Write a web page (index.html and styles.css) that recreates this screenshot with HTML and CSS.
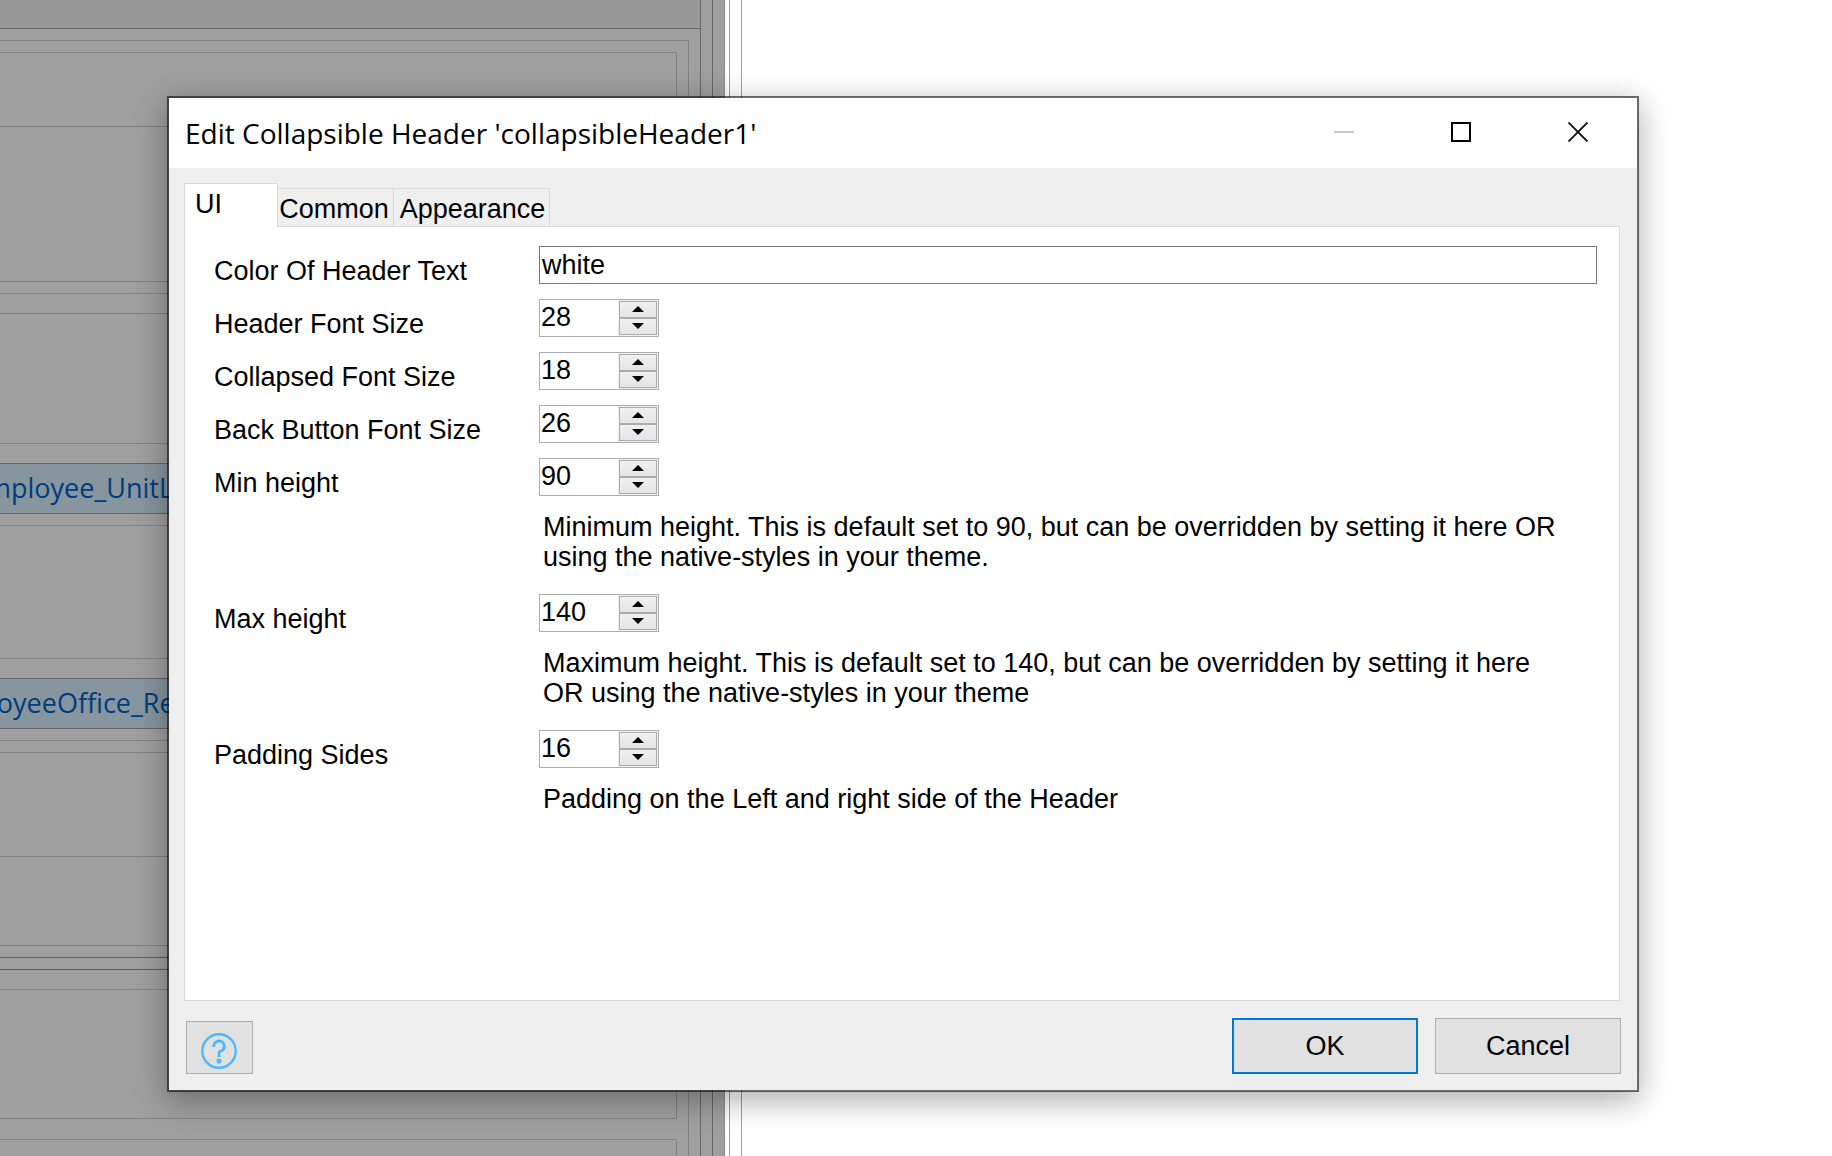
FILE: index.html
```html
<!DOCTYPE html>
<html lang="en">
<head>
<meta charset="utf-8">
<title>Edit Collapsible Header</title>
<link rel="stylesheet" href="styles.css">
</head>
<body>
<div class="desktop">
  <div class="canvas" aria-hidden="true">
    <div class="page">
      <div class="page-header"></div>
      <div class="group">
        <div class="box">
          <div class="cell cell-short"></div>
          <div class="cell cell-tall cell-end"></div>
          <div class="cell cell-gap"></div>
          <div class="cell cell-medium"></div>
          <div class="cell cell-gap"></div>
          <div class="field">mployee_UnitLocation</div>
          <div class="cell cell-large"></div>
          <div class="cell cell-gap"></div>
          <div class="field field-office">loyeeOffice_Region</div>
          <div class="cell cell-edge"></div>
          <div class="cell cell-low"></div>
          <div class="cell cell-lower cell-end"></div>
          <div class="cell cell-edge cell-dark"></div>
          <div class="cell cell-gap cell-dark"></div>
          <div class="cell cell-medium cell-end cell-spaced"></div>
          <div class="cell cell-short"></div>
        </div>
      </div>
    </div>
  </div>
  <div class="side" aria-hidden="true"><div class="splitter"></div></div>

  <form class="dialog" role="dialog" aria-labelledby="dialog-title">
    <header class="titlebar">
      <h1 id="dialog-title">Edit Collapsible Header 'collapsibleHeader1'</h1>
      <div class="window-buttons">
        <button type="button" aria-label="Minimize" disabled><svg width="20" height="20" viewBox="0 0 20 20"><path d="M0 10H20" stroke="#c8c8c8" stroke-width="2"/></svg></button>
        <button type="button" aria-label="Maximize"><svg width="20" height="20" viewBox="0 0 20 20"><path d="M1 1H19V19H1Z" fill="none" stroke="#000" stroke-width="2"/></svg></button>
        <button type="button" aria-label="Close"><svg width="20" height="20" viewBox="0 0 20 20"><path d="M.5 .5L19.500 19.500M19.500 .5L.5 19.500" stroke="#111" stroke-width="1.900"/></svg></button>
      </div>
    </header>
    <div class="content">
      <div class="tabs" role="tablist">
        <button type="button" class="tab tab-active" role="tab" aria-selected="true">UI</button>
        <button type="button" class="tab" role="tab">Common</button>
        <button type="button" class="tab tab-wide" role="tab">Appearance</button>
      </div>
      <div class="panel" role="tabpanel">
        <label for="color">Color Of Header Text</label>
        <input class="text" id="color" type="text" value="white">

        <label for="header-size">Header Font Size</label>
        <div class="spinner"><input id="header-size" type="text" inputmode="numeric" value="28"><div class="steps"><button type="button" class="up" aria-label="Increase"></button><button type="button" class="down" aria-label="Decrease"></button></div></div>

        <label for="collapsed-size">Collapsed Font Size</label>
        <div class="spinner"><input id="collapsed-size" type="text" inputmode="numeric" value="18"><div class="steps"><button type="button" class="up" aria-label="Increase"></button><button type="button" class="down" aria-label="Decrease"></button></div></div>

        <label for="back-size">Back Button Font Size</label>
        <div class="spinner"><input id="back-size" type="text" inputmode="numeric" value="26"><div class="steps"><button type="button" class="up" aria-label="Increase"></button><button type="button" class="down" aria-label="Decrease"></button></div></div>

        <label for="min-height">Min height</label>
        <div class="spinner"><input id="min-height" type="text" inputmode="numeric" value="90"><div class="steps"><button type="button" class="up" aria-label="Increase"></button><button type="button" class="down" aria-label="Decrease"></button></div></div>
        <p>Minimum height. This is default set to 90, but can be overridden by setting it here OR using the native-styles in your theme.</p>

        <label for="max-height">Max height</label>
        <div class="spinner"><input id="max-height" type="text" inputmode="numeric" value="140"><div class="steps"><button type="button" class="up" aria-label="Increase"></button><button type="button" class="down" aria-label="Decrease"></button></div></div>
        <p>Maximum height. This is default set to 140, but can be overridden by setting it here OR using the native-styles in your theme</p>

        <label for="padding-sides">Padding Sides</label>
        <div class="spinner"><input id="padding-sides" type="text" inputmode="numeric" value="16"><div class="steps"><button type="button" class="up" aria-label="Increase"></button><button type="button" class="down" aria-label="Decrease"></button></div></div>
        <p>Padding on the Left and right side of the Header</p>
      </div>
      <footer class="actions">
        <button type="button" class="button help" aria-label="Help"><svg width="36" height="36" viewBox="0 0 36 36" fill="none" stroke="#4db8ff" stroke-width="2.400"><circle cx="18" cy="18" r="16.700"/><path stroke-width="2.800" d="M12.700 14V13.200a5.300 5.300 0 1 1 8 4.600Q18 18.400 18 19.500V24"/><circle cx="18" cy="28" r="2.600" fill="#4db8ff" stroke="none"/></svg></button>
        <button type="submit" class="button ok">OK</button>
        <button type="button" class="button">Cancel</button>
      </footer>
    </div>
  </form>
</div>
</body>
</html>
```
FILE: styles.css
```css
* { box-sizing: border-box; }

body {
  margin: 0;
  background: #fff;
  color: #000;
  font-family: "Liberation Sans", Arial, sans-serif;
  font-size: 27px;
  line-height: 30px;
}

button, input { font: inherit; color: inherit; margin: 0; border-radius: 0; }

.desktop {
  position: relative;
  display: grid;
  grid-template-columns: 725fr 1107fr;
  grid-template-rows: 100%;
  height: 100vh;
  min-height: 1120px;
  overflow: hidden;
}

/* Page editor behind the dialog */
.canvas {
  background: #9f9f9f;
  padding-right: 11px;
  border-right: 1px solid #8a8a8a;
  overflow: hidden;
}
.page {
  border-right: 1px solid #666;
  padding-right: 11px;
}
.page-header {
  height: 29px;
  background: #999;
  border-bottom: 1px solid #666;
  border-right: 1px solid #666;
}
.group {
  border-right: 1px solid #666;
  padding: 11px 11px 0 0;
}
.box {
  border: 1px solid #828282;
  border-width: 1px 1px 0 0;
  padding: 11px 11px 0 0;
}
.cell {
  border: 1px solid #828282;
  border-width: 1px 1px 0 0;
}
.cell-edge { height: 12px; }
.cell-gap { height: 20px; }
.cell-short { height: 74px; }
.cell-lower { height: 90px; }
.cell-low { height: 104px; }
.cell-medium { height: 130px; }
.cell-large { height: 133px; }
.cell-tall { height: 156px; }
.cell-end { border-bottom-width: 1px; margin-bottom: 11px; }
.cell-spaced { margin-bottom: 20px; }
.cell-dark { border-top-color: #606060; }
.field {
  height: 51px;
  margin-bottom: 11px;
  border: 1px solid #666;
  border-width: 1px 0;
  background: #87959e;
  color: #003d7d;
  font: 27px/48px "Open Sans", "Noto Sans", sans-serif;
  text-indent: -14px;
  white-space: nowrap;
}
.field-office { text-indent: -10px; }
.side { padding-left: 4px; }
.splitter {
  width: 13px;
  height: 100%;
  border: 1px solid #a0a0a0;
  border-width: 0 1px;
}

/* Dialog window */
.dialog {
  position: absolute;
  top: 96px;
  left: 167px;
  right: 193px;
  border: 2px solid rgba(0, 0, 0, .56);
  background: #efefef;
  background-clip: padding-box;
  box-shadow: 0 8px 30px rgba(0, 0, 0, .33);
}
.titlebar {
  display: flex;
  justify-content: space-between;
  height: 70px;
  padding-left: 16px;
  background: #fff;
}
h1 {
  margin: 0;
  font: 28px/70px "Open Sans", "Noto Sans", sans-serif;
}
.window-buttons { display: flex; }
.window-buttons button {
  display: grid;
  place-items: center;
  width: 117px;
  padding: 0 1px 2px 0;
  border: 0;
  background: none;
}
.content { padding: 15px 17px 16px 15px; }
.tabs {
  display: flex;
  align-items: flex-end;
  height: 43px;
}
.tab {
  height: 38px;
  padding: 2px 4px 0 1px;
  border: 1px solid #d9d9d9;
  border-width: 1px 1px 0 0;
  background: none;
  text-align: center;
  width: 116px;
}
.tab-active {
  position: relative;
  width: 94px;
  height: 44px;
  margin-bottom: -1px;
  padding: 0 0 4px 10px;
  border-left-width: 1px;
  background: #fff;
  text-align: left;
}
.tab-wide { width: 156px; padding: 2px 2px 0 4px; }
.panel {
  display: grid;
  grid-template-columns: 325px 1fr;
  align-content: start;
  row-gap: 15px;
  min-height: 775px;
  padding: 19px 22px 40px 29px;
  border: 1px solid #d9d9d9;
  background: #fff;
}
.panel label { padding-top: 10px; height: 38px; }
.text {
  width: 100%;
  height: 38px;
  padding: 1px 2px 0;
  border: 1px solid #7a7a7a;
  background: #fff;
}
.spinner {
  display: flex;
  width: 120px;
  height: 38px;
  border: 1px solid #abadb3;
}
.spinner input {
  width: 78px;
  padding: 0 1px 2px;
  border: 0;
  background: #fff;
}
.steps {
  flex: 1;
  display: grid;
  grid-template-rows: 1fr 1fr;
  padding: 1px;
  background: #f0f0f0;
}
.steps button {
  display: grid;
  place-items: center;
  padding: 0 0 1px;
  border: 1px solid #acacac;
  background: linear-gradient(#f0f0f0, #e5e5e5);
}
.steps button::before {
  content: "";
  border: 0 solid transparent;
  border-width: 0 6px;
}
.steps .up::before { border-bottom: 6px solid #000; }
.steps .down::before { border-top: 6px solid #000; }
.panel p {
  grid-column: 2;
  margin: 0;
  padding: 1px 26px 7px 4px;
}
.actions {
  display: flex;
  align-items: flex-end;
  gap: 17px;
  margin: 17px -1px 0 2px;
}
.button {
  width: 186px;
  height: 56px;
  padding: 0;
  border: 1px solid #adadad;
  background: #e1e1e1;
}
.help {
  display: grid;
  place-items: center;
  width: 67px;
  height: 53px;
  padding: 6px 1px 0 0;
  margin-right: auto;
}
.ok { border: 2px solid #0078d7; }
```
